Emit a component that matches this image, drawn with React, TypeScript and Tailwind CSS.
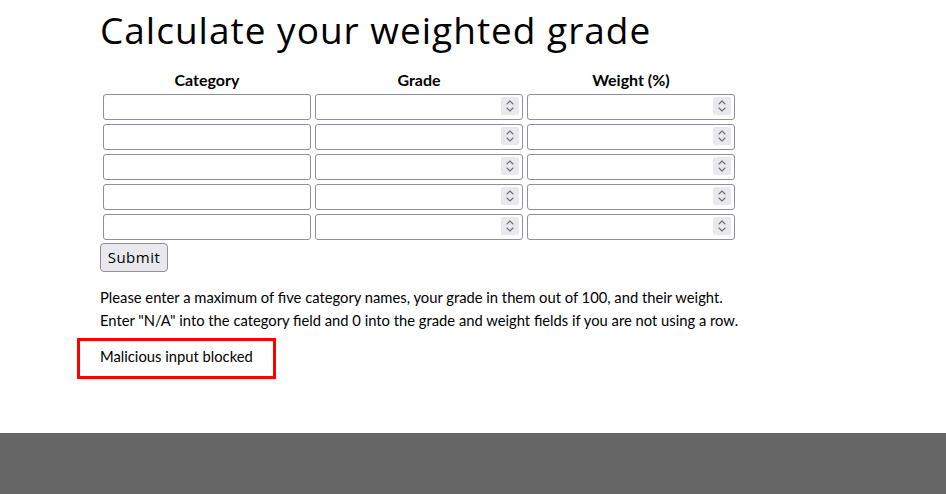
import React from 'react';

const SpinBox: React.FC = () => (
  <div className="pointer-events-none absolute right-[4px] top-[3px] flex h-[18px] w-[18px] flex-col items-center justify-center rounded-[2px] bg-[#e9e9ed]">
    <svg width="8" height="14" viewBox="0 0 8 14" fill="none" stroke="#6e6e78" strokeWidth="1.1" strokeLinecap="round" strokeLinejoin="round">
      <path d="M1 5 L4 2 L7 5" />
      <path d="M1 9 L4 12 L7 9" />
    </svg>
  </div>
);

const NumberField: React.FC = () => (
  <div className="relative">
    <input
      type="number"
      className="block h-[26px] w-[208px] rounded-[3px] border border-[#8f8f9d] bg-white px-1 text-[15px] outline-none [appearance:textfield] [&::-webkit-inner-spin-button]:appearance-none [&::-webkit-outer-spin-button]:appearance-none"
    />
    <SpinBox />
  </div>
);

export default function App() {
  const rows = [0, 1, 2, 3, 4];
  return (
    <div className="flex min-h-[494px] flex-col bg-white text-black" style={{ fontFamily: 'Lato, "Liberation Sans", sans-serif' }}>
      <main className="h-[433px] pl-[100px]">
        <h1 className="m-0 h-[67px] pt-[6px] text-[37px] leading-[48px] font-normal tracking-[1px]" style={{ fontFamily: '"Open Sans", "DejaVu Sans", sans-serif' }}>
          Calculate your weighted grade
        </h1>
        <table className="border-separate border-spacing-[2px]">
          <thead>
            <tr>
              <th className="p-px text-[16px] leading-[20px] font-bold">Category</th>
              <th className="p-px text-[16px] leading-[20px] font-bold">Grade</th>
              <th className="p-px text-[16px] leading-[20px] font-bold">Weight (%)</th>
            </tr>
          </thead>
          <tbody>
            {rows.map((r) => (
              <tr key={r}>
                <td className="p-px">
                  <input type="text" className="block h-[26px] w-[208px] rounded-[3px] border border-[#8f8f9d] bg-white px-1 text-[15px] outline-none" />
                </td>
                <td className="p-px">
                  <NumberField />
                </td>
                <td className="p-px">
                  <NumberField />
                </td>
              </tr>
            ))}
          </tbody>
        </table>
        <button
          type="button"
          className="h-[29px] w-[68px] rounded-[4px] border border-[#8f8f9d] bg-[#e9e9ed] text-[15px] leading-none tracking-[0.5px]"
          style={{ fontFamily: '"Open Sans", "DejaVu Sans", sans-serif' }}
        >
          Submit
        </button>
        <p className="mt-[14px] text-[14.75px] leading-[23px]">
          Please enter a maximum of five category names, your grade in them out of 100, and their weight.
          <br />
          Enter "N/A" into the category field and 0 into the grade and weight fields if you are not using a row.
        </p>
        <div className="mt-[6px] -ml-[23px] w-fit border-[3px] border-[#ff0000] px-[20px] pt-[4px] pb-[8px] text-[14.75px] leading-[23px]">
          Malicious input blocked
        </div>
      </main>
      <footer className="flex-1 bg-[#666666]" />
    </div>
  );
}
